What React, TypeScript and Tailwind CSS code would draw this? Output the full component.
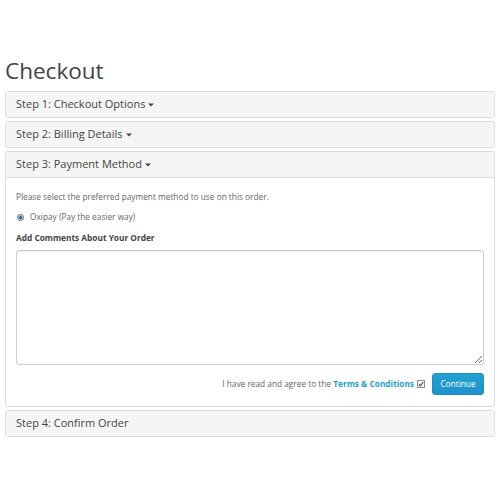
import React from "react";

const font = { fontFamily: "'Open Sans', 'Liberation Sans', sans-serif" };

function Caret() {
  return (
    <svg width="6" height="4" viewBox="0 0 6 4" className="ml-[3px] inline-block">
      <path d="M0 0.5 L6 0.5 L3 3.5 Z" fill="#444" />
    </svg>
  );
}

function PanelHeading({ title, open }: { title: string; open?: boolean }) {
  return (
    <div
      className={
        "flex items-center bg-[#f5f5f5] px-[10px] text-[11px] text-[#444] " +
        (open ? "h-[26px] rounded-t-[3px] border-b border-[#ddd]" : "h-[25px]")
      }
    >
      <span>{title}</span>
      {title.startsWith("Step 4") ? null : <Caret />}
    </div>
  );
}

function Panel({ title, children }: { title: string; children?: React.ReactNode }) {
  return (
    <div className="overflow-hidden rounded-[3px] border border-[#ddd] bg-white">
      <PanelHeading title={title} open={!!children} />
      {children}
    </div>
  );
}

export default function App() {
  return (
    <div className="h-[500px] w-[500px] bg-white px-[5px] pt-[58px]" style={font}>
      <h1 className="mb-[7px] text-[22.5px] leading-[26px] text-[#444]">Checkout</h1>
      <div className="flex flex-col gap-[3px]">
        <Panel title="Step 1: Checkout Options" />
        <Panel title="Step 2: Billing Details" />
        <Panel title="Step 3: Payment Method">
          <div className="px-[10px] pb-[11px] pt-[13px] text-[8.3px] text-[#666]">
            <p className="leading-[12px]">Please select the preferred payment method to use on this order.</p>
            <div className="mt-[8px] flex items-center leading-[12px]">
              <span className="ml-[1px] mr-[6px] flex h-[7px] w-[7px] items-center justify-center rounded-full border border-[#5a7487] bg-[#b9d3e6]">
                <span className="h-[3px] w-[3px] rounded-full bg-[#1d5f8a]" />
              </span>
              <span>Oxipay (Pay the easier way)</span>
            </div>
            <div className="mt-[9px] font-bold leading-[12px] text-[#444]">Add Comments About Your Order</div>
            <textarea className="mt-[6px] block h-[115px] w-full rounded-[3px] border border-[#ccc] bg-white outline-none shadow-[inset_0_1px_1px_rgba(0,0,0,0.075)]" />
            <div className="mt-[8px] flex items-center justify-end">
              <span>
                I have read and agree to the{" "}
                <span className="font-bold text-[#23a1d1]">Terms &amp; Conditions</span>
              </span>
              <span className="ml-[3px] flex h-[8px] w-[8px] items-center justify-center border border-[#8b8b8b] bg-[#f4f4f4]">
                <svg width="6" height="6" viewBox="0 0 6 6">
                  <path d="M0.8 3.2 L2.4 4.8 L5.3 1" stroke="#3a4a5a" strokeWidth="1.1" fill="none" />
                </svg>
              </span>
              <button className="ml-[7px] h-[22px] w-[52px] rounded-[3px] border border-[#1f90bb] bg-gradient-to-b from-[#23a1d1] to-[#1e91cf] text-[8.3px] text-white">
                Continue
              </button>
            </div>
          </div>
        </Panel>
        <Panel title="Step 4: Confirm Order" />
      </div>
    </div>
  );
}
